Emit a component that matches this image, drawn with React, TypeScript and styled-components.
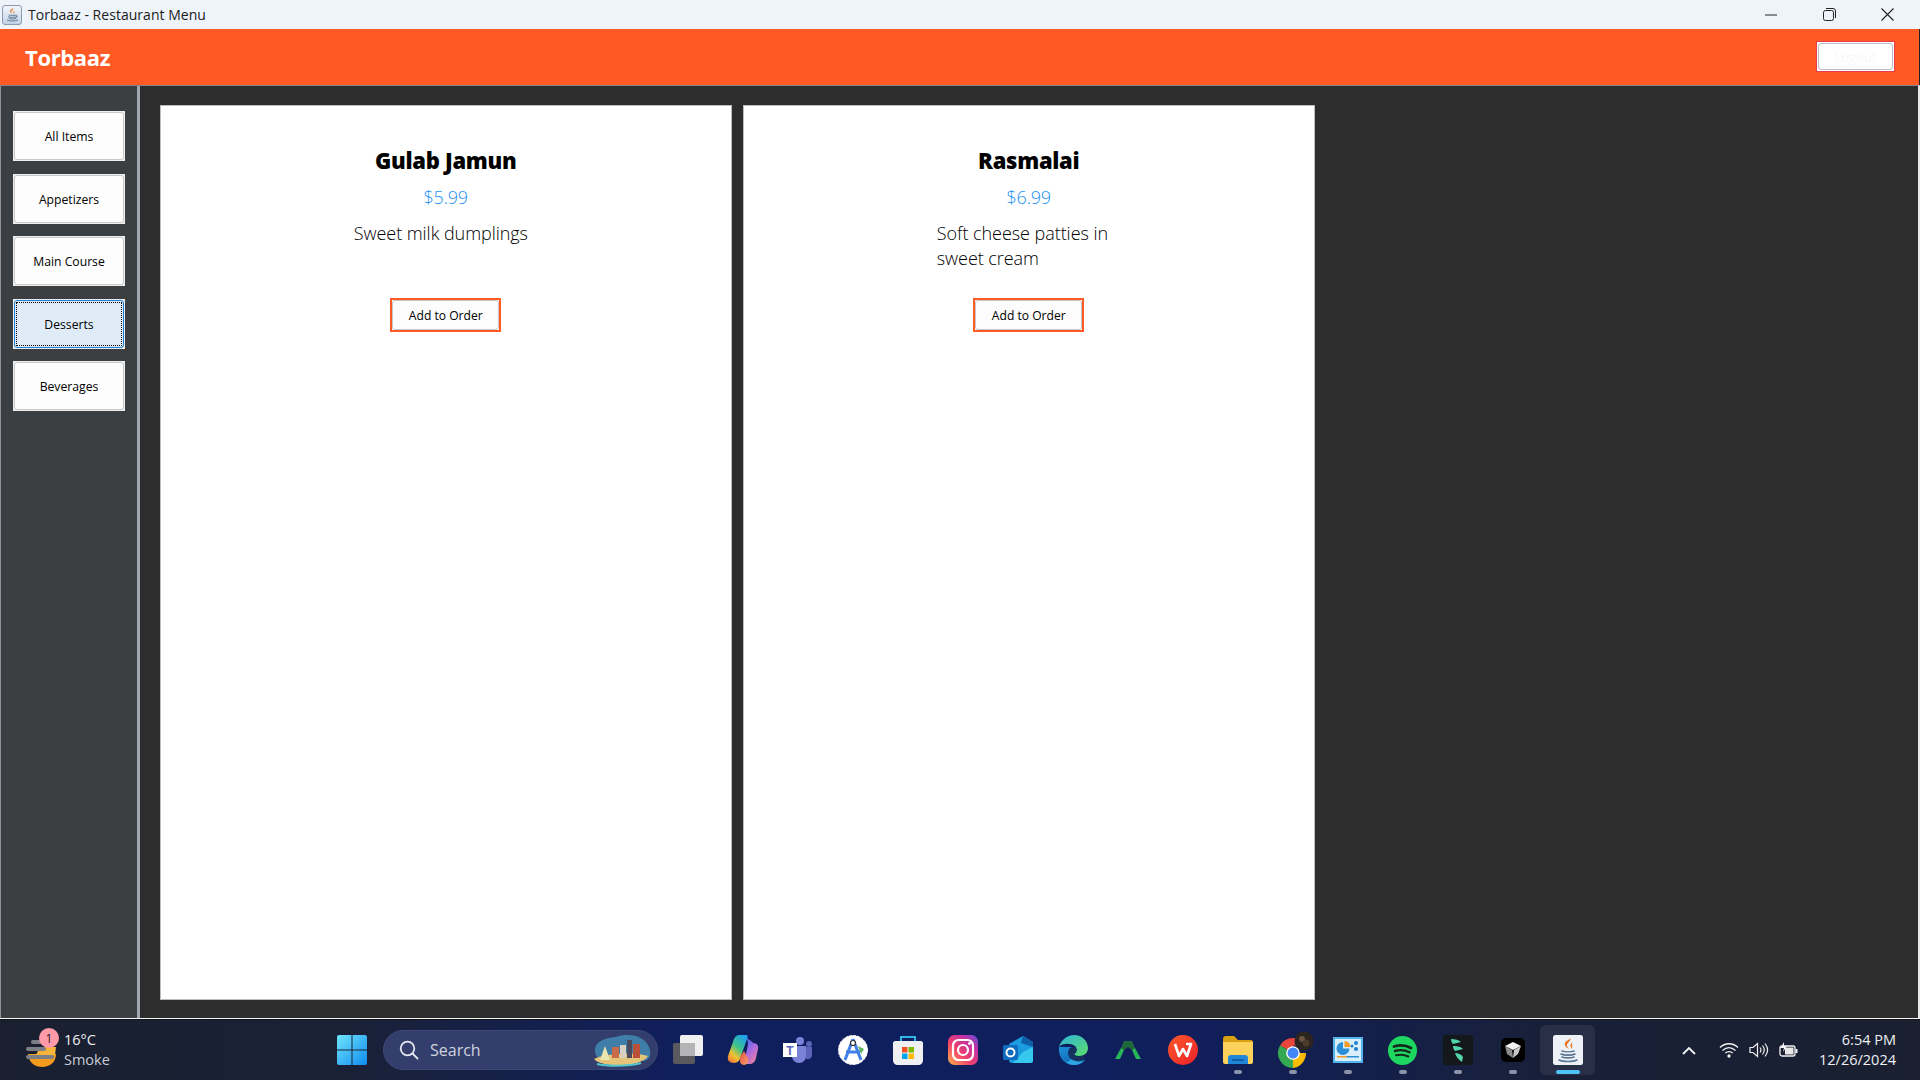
import React from 'react';
import styled, { createGlobalStyle } from 'styled-components';

const Global = createGlobalStyle`
  html, body { margin: 0; padding: 0; background: #2d2d2d; }
  * { box-sizing: border-box; }
  #root { width: 1920px; height: 1080px; overflow: hidden; }
`;

const Frame = styled.div`
  width: 1920px; height: 1080px; display: flex; flex-direction: column;
  font-family: "Open Sans", "Noto Sans", sans-serif; color: #000;
`;

const TitleBar = styled.div`
  height: 29px; flex: none; background: #eff3fa; display: flex; align-items: center; padding: 0 3px 0 2px;
`;
const TitleIcon = styled.div`
  width: 20px; height: 20px; margin-right: 6px; border: 1px solid #8b9bb0; border-radius: 3px;
  background: linear-gradient(#f2f6fb, #c3d3e6); display: flex; align-items: center; justify-content: center;
`;
const TitleText = styled.span`
  font-size: 14px; color: #1c1c1c; letter-spacing: 0.03px; flex: 1; white-space: nowrap;
`;
const WindowControl = styled.div`
  width: 58.5px; height: 29px; display: flex; align-items: center; justify-content: center;
`;

const Header = styled.header`
  height: 56px; flex: none; background: #ff5a23; display: flex; align-items: center; justify-content: space-between;
  padding: 0 24px 1px 25px; border-right: 1px solid #222;
`;
const Brand = styled.h1`
  margin: 0; font-size: 22px; font-weight: 700; color: #fff; letter-spacing: -0.35px;
`;
const Logout = styled.button`
  width: 79px; height: 31px; padding: 1px; margin: 0; background: #fff; border: 1px solid #e43b4f; font: inherit; display: block; cursor: default;
`;
const LogoutFace = styled.span`
  display: flex; align-items: center; justify-content: center; width: 100%; height: 100%;
  border: 1px solid #bcbcc2; border-radius: 3px; background: #fff; font-size: 13px; color: #f8f8f8;
`;

const Body = styled.div`
  flex: 1; min-height: 0; display: flex; border-top: 1px solid #7f858c; border-bottom: 1px solid #f4f4f4; border-right: 2px solid #e8e8e8;
`;
const Sidebar = styled.nav`
  width: 140px; flex: none; background: #3c3f41; border-left: 1px solid #8c919b; border-right: 3px solid #a2a6b0;
  display: flex; flex-direction: column; gap: 12.5px; padding: 25px 0 0 12px;
`;
const SideButton = styled.button`
  width: 112px; height: 50px; padding: 1px; margin: 0; border: 0; background: #eeeeee; font: inherit; display: block; cursor: default;
`;
const Face = styled.span<{ $active?: boolean }>`
  display: flex; align-items: center; justify-content: center; width: 100%; height: 100%;
  font-size: 12.2px; color: #000; border-radius: 3px; padding-top: 1px;
  border: 1px solid ${p => (p.$active ? '#1b7fd4' : '#c8c8c8')};
  background: ${p => (p.$active ? '#dfecf8' : '#fdfdfd')};
  outline: ${p => (p.$active ? '1px dotted #000' : 'none')};
  outline-offset: -3px;
`;

const Main = styled.main`
  flex: 1; min-width: 0; background: #2d2d2d; padding: 19px 0 18px 20px; display: flex; gap: 11.5px;
`;
const Card = styled.article`
  width: 571.5px; background: #fff; border: 1px solid #bdbdbd; display: flex; flex-direction: column; align-items: center; padding-top: 39px;
`;
const CardTitle = styled.h2`
  margin: 0; font-size: 22px; line-height: 30px; font-weight: 800; color: #000; letter-spacing: -0.3px;
`;
const Price = styled.div`
  margin-top: 10px; font-size: 18px; line-height: 24px; color: #1f92f5; font-weight: 300; letter-spacing: -0.2px;
`;
const Description = styled.p`
  margin: 12px 0 0; width: 184px; height: 77px; font-size: 18px; line-height: 25px; font-weight: 300; color: #000; letter-spacing: -0.05px;
`;
const OrderButton = styled.button`
  width: 111px; height: 34px; padding: 0; margin: 0; border: 2px solid #ff5a23; background: #fff; font: inherit; display: block; cursor: default;
`;
const OrderFace = styled.span`
  display: flex; align-items: center; justify-content: center; width: 100%; height: 100%;
  border: 1px solid #c6c6c6; border-radius: 3px; background: #fcfcfc; font-size: 12.1px; color: #000;
`;

const Taskbar = styled.footer`
  height: 61px; flex: none; display: flex; align-items: center; position: relative;
  background: linear-gradient(90deg, #1a2030 0%, #1a2136 18%, #0f1f5e 36%, #101f5c 62%, #182039 80%, #1a2030 100%);
  border-top: 1px solid #12141c;
`;
const Weather = styled.div`
  width: 324px; flex: none; display: flex; align-items: center; gap: 6px; padding-left: 24px; height: 100%;
`;
const WeatherIcon = styled.div`
  width: 34px; height: 40px; position: relative; flex: none;
`;
const Badge = styled.span`
  position: absolute; left: 15px; top: -2px; width: 20px; height: 20px; border-radius: 50%; background: #ff9aa8; color: #222;
  font-size: 12px; display: flex; align-items: center; justify-content: center;
`;
const WeatherText = styled.div`
  display: flex; flex-direction: column; color: #eee; font-size: 14.5px; line-height: 20px;
`;
const Muted = styled.span`
  color: #c8ccd4;
`;
const IconSlot = styled.div<{ $current?: boolean }>`
  width: 55px; height: 50px; flex: none; display: flex; align-items: center; justify-content: center; position: relative; border-radius: 6px;
  background: ${p => (p.$current ? 'rgba(255,255,255,0.07)' : 'transparent')};
`;
const RunDot = styled.span<{ $current?: boolean }>`
  position: absolute; bottom: 1px; left: 50%; transform: translateX(-50%); height: 4px; border-radius: 2px;
  width: ${p => (p.$current ? '24px' : '8px')}; background: ${p => (p.$current ? '#4fc3f7' : '#8b93a8')};
`;
const SearchBox = styled.div`
  width: 275px; height: 40px; flex: none; border-radius: 20px; background: #333e6c; display: flex; align-items: center;
  padding: 0 5px 0 15px; margin: 0 2px 0 4px; gap: 11px; color: #cfd3df; font-size: 16px; border: 1px solid #3d4876;
`;
const SearchLabel = styled.span`
  flex: 1;
`;
const Tray = styled.div`
  margin-left: auto; display: flex; align-items: center; height: 100%; padding-right: 24px;
`;
const TrayIcon = styled.div`
  width: 30px; display: flex; align-items: center; justify-content: center;
`;
const Clock = styled.div`
  margin-left: 15px; text-align: right; color: #eef0f4; font-size: 14.5px; line-height: 20px; white-space: nowrap;
`;
const Spacer = styled.div`
  width: 10px;
`;

const JavaCup = ({ s = 30 }: { s?: number }) => (
  <svg width={s} height={s} viewBox="0 0 30 30">
    <path d="M16 3c2 3-4 5-3 8 .5 1.500 2 2.500 2 3-2-1-5-3-4-6 1-3 5-3 5-5zM19 7c-3 2-3 3-2 5 .5 1-.5 2-1 2 2-.5 3-2 2-4-.5-1 0-2 1-3z" fill="#e8762a" />
    <path d="M9 16c3 1 9 1 12 0M8 19c3 1.500 11 1.500 14 0M9 22c3 1.200 9 1.200 12 0M6 25c4 2 14 2 18 0" fill="none" stroke="#4f6d8c" strokeWidth="1.600" strokeLinecap="round" />
    <path d="M21 17c3-1 4 2 0 3" fill="none" stroke="#4f6d8c" strokeWidth="1.200" />
  </svg>
);

const TaskView = () => (
  <svg width="32" height="30" viewBox="0 0 32 30">
    <rect x="1" y="8" width="22" height="21" rx="2" fill="#5a5a5e" />
    <rect x="8" y="0" width="23" height="21" rx="2" fill="#f0f0f0" />
    <rect x="8" y="8" width="15" height="13" fill="#b4b4b6" />
  </svg>
);

const Copilot = () => (
  <svg width="32" height="32" viewBox="0 0 32 32">
    <defs>
      <linearGradient id="cpa" x1="0.800" y1="0" x2="0.200" y2="1"><stop offset="0" stopColor="#1fa0f0" /><stop offset=".45" stopColor="#3cc48a" /><stop offset=".75" stopColor="#f2c233" /><stop offset="1" stopColor="#ee7a3a" /></linearGradient>
      <linearGradient id="cpb" x1="0.200" y1="0" x2="0.800" y2="1"><stop offset="0" stopColor="#2a6fe8" /><stop offset=".5" stopColor="#a86ae4" /><stop offset="1" stopColor="#f0809a" /></linearGradient>
      <linearGradient id="cpc" x1="0" y1="0" x2="1" y2="1"><stop offset="0" stopColor="#e8503c" /><stop offset="1" stopColor="#f4a070" /></linearGradient>
    </defs>
    <path d="M17 1c3 4 7 5 9 8 3 0 6 2 5 6l-2 9c-1 4-3 6-7 6h-4l1-10 2-10c0-4-2-7-4-9z" fill="url(#cpb)" />
    <path d="M12 1h7c2 0 2 2 1 4l-6 17c-1 4-3 7-7 7-5 0-7-3-6-7L6 8c1-4 3-7 6-7z" fill="url(#cpa)" />
    <path d="M13 23l4-6 4 7c1 4-1 7-4 7-3 0-5-3-4-8z" fill="url(#cpc)" />
  </svg>
);

const Teams = () => (
  <svg width="30" height="26" viewBox="0 0 30 26">
    <circle cx="17" cy="4" r="4" fill="#7b83d8" /><circle cx="26" cy="7" r="3" fill="#5b63b8" />
    <path d="M21 10h8v8c0 3-3 5-6 4z" fill="#5b63b8" />
    <path d="M9 9h14v10c0 4-3 7-7 7s-7-3-7-7z" fill="#7b83d8" />
    <rect x="0" y="6" width="14" height="14" fill="#fff" />
    <text x="7" y="17.500" textAnchor="middle" fontFamily="Liberation Sans, sans-serif" fontWeight="700" fontSize="12" fill="#5b63b8">T</text>
  </svg>
);

const AIcon = () => (
  <svg width="30" height="30" viewBox="0 0 30 30">
    <circle cx="15" cy="15" r="14.500" fill="#fff" stroke="#fff" strokeDasharray="3 1" />
    <path d="M15 4l-8 21M15 4l8 21" stroke="#3f7fe8" strokeWidth="3" fill="none" />
    <path d="M8 17h14" stroke="#3f7fe8" strokeWidth="3" />
    <path d="M20 11l6 3-3 5z" fill="#5fb35a" />
    <circle cx="15" cy="8" r="2.500" fill="#fff" stroke="#333" strokeWidth="1.200" />
  </svg>
);

const Store = () => (
  <svg width="30" height="30" viewBox="0 0 30 30">
    <path d="M8 7V2h14v5" fill="none" stroke="#2bb5e8" strokeWidth="2" />
    <path d="M2 6h26c1 0 2 1 2 2v17c0 3-2 5-5 5H5c-3 0-5-2-5-5V8c0-1 1-2 2-2z" fill="#eef0f2" />
    <rect x="9" y="12" width="5.500" height="5.500" fill="#f25022" /><rect x="15.500" y="12" width="5.500" height="5.500" fill="#7fba00" />
    <rect x="9" y="18.500" width="5.500" height="5.500" fill="#00a4ef" /><rect x="15.500" y="18.500" width="5.500" height="5.500" fill="#ffb900" />
  </svg>
);

const Instagram = () => (
  <svg width="30" height="30" viewBox="0 0 30 30">
    <defs>
      <linearGradient id="ig" x1="0" y1="1" x2="1" y2="0"><stop offset="0" stopColor="#fdb44a" /><stop offset=".4" stopColor="#f0406a" /><stop offset=".75" stopColor="#c22fa8" /><stop offset="1" stopColor="#5d55d8" /></linearGradient>
    </defs>
    <rect width="30" height="30" rx="6.500" fill="url(#ig)" />
    <rect x="5" y="5" width="20" height="20" rx="5.500" fill="none" stroke="#fff" strokeWidth="2.200" />
    <circle cx="15" cy="15" r="5" fill="none" stroke="#fff" strokeWidth="2.200" />
    <circle cx="21.500" cy="8.500" r="1.400" fill="#fff" />
  </svg>
);

const Outlook = () => (
  <svg width="30" height="28" viewBox="0 0 30 28">
    <path d="M6 8l14-8 10 6v18c0 2-1 3-3 3H9c-2 0-3-1-3-3z" fill="#1c9ce0" />
    <path d="M20 0l10 6v5L18 7z" fill="#0d5fa8" />
    <path d="M10 27l10-11 10-5v14c0 1-1 2-3 2z" fill="#37c8f0" />
    <rect x="0" y="9" width="15" height="15" rx="1.500" fill="#0f6cc0" />
    <circle cx="7.500" cy="16.500" r="4" fill="none" stroke="#fff" strokeWidth="2" />
  </svg>
);

const Edge = () => (
  <svg width="30" height="30" viewBox="0 0 30 30">
    <defs>
      <linearGradient id="edg" x1="0" y1="0" x2="1" y2="1"><stop offset="0" stopColor="#1f8fd8" /><stop offset="1" stopColor="#0b5aa8" /></linearGradient>
      <linearGradient id="edh" x1="0" y1="0" x2="1" y2="1"><stop offset="0" stopColor="#2fb4d8" /><stop offset="1" stopColor="#5cdc6c" /></linearGradient>
    </defs>
    <path d="M1 12C0 22 6 30 16 30c5 0 9-2 11-5-6 2-14 1-16-4-2-4 0-8 3-9z" fill="url(#edg)" />
    <path d="M1 12C3 5 9 0 16 0c8 0 14 6 14 13 0 5-4 8-9 8-3 0-5-1-5-2 3-1 4-5 1-8-4-3-13-3-16 1z" fill="url(#edh)" />
    <path d="M11 21c-1-4 1-8 5-9 3 1 3 5 0 7 1 2 4 3 7 2 2 0 3-1 4 4-5 4-14 2-16-4z" fill="#14315f" />
    <path d="M13 24c4 3 10 3 14 1-3 3-7 5-11 5-3 0-6-1-8-3 2 0 4-1 5-3z" fill="#2ea6e4" />
  </svg>
);

const VueMark = () => (
  <svg width="26" height="18" viewBox="0 0 26 18">
    <path d="M9 0h8l3 7-3 2-4-3-4 3-3-2z" fill="#21683c" />
    <path d="M6 7l3 2-4 9H0z" fill="#27b558" /><path d="M20 7l-3 2 4 9h5z" fill="#27b558" />
  </svg>
);

const Wps = () => (
  <svg width="30" height="30" viewBox="0 0 30 30">
    <defs><linearGradient id="wps" x1="0" y1="0" x2="1" y2="1"><stop offset="0" stopColor="#ff5a2a" /><stop offset="1" stopColor="#e8202a" /></linearGradient></defs>
    <circle cx="15" cy="15" r="15" fill="url(#wps)" />
    <path d="M7 9l4 12 4-7 4 7 4-12h-5" fill="none" stroke="#fff" strokeWidth="2.600" strokeLinejoin="round" />
  </svg>
);

const Folder = () => (
  <svg width="30" height="28" viewBox="0 0 30 28">
    <path d="M0 3c0-2 1-3 3-3h8l4 4h13c1 0 2 1 2 2v3H0z" fill="#d9a012" />
    <path d="M0 6h30v20c0 1-1 2-2 2H2c-1 0-2-1-2-2z" fill="#fcd25a" />
    <path d="M5 28v-6c0-2 1-3 3-3h14c2 0 3 1 3 3v6z" fill="#1f86d8" />
    <rect x="9" y="23" width="12" height="2" fill="#0f5fa8" />
  </svg>
);

const Chrome = () => (
  <svg width="42" height="36" viewBox="-6 0 42 36">
    <g transform="translate(0 6)">
      <path d="M15 15L2 7.500A15 15 0 0 1 28 7.500H15z" fill="#e8453a" />
      <path d="M15 15L2 7.500A15 15 0 0 0 15 30z" fill="#35a853" />
      <path d="M15 15h13A15 15 0 0 1 15 30z" fill="#fbbc05" />
      <circle cx="15" cy="15" r="6.800" fill="#fff" /><circle cx="15" cy="15" r="5.500" fill="#4285f4" />
    </g>
    <circle cx="26" cy="9" r="9.500" fill="#2c241e" />
    <circle cx="24" cy="7" r="3" fill="#6b5442" /><circle cx="28" cy="11" r="3.500" fill="#4c3a2c" />
  </svg>
);

const Panel = () => (
  <svg width="30" height="26" viewBox="0 0 30 26">
    <rect width="30" height="26" fill="#54b4ee" /><rect x="2" y="2" width="26" height="22" fill="#d8eefb" />
    <path d="M10 5a6.500 6.500 0 1 0 6.500 6.500H10z" fill="#2b8fd8" /><path d="M11.500 4v6h6a6 6 0 0 0-6-6z" fill="#f59a23" />
    <circle cx="23" cy="6" r="2" fill="#1f7fd0" /><circle cx="23" cy="12" r="2" fill="#1f7fd0" /><circle cx="19" cy="9" r="1.500" fill="#1f7fd0" />
    <rect x="4" y="19" width="10" height="1.500" fill="#f59a23" /><rect x="14" y="19" width="12" height="1.500" fill="#2b8fd8" />
  </svg>
);

const Spotify = () => (
  <svg width="29" height="29" viewBox="0 0 29 29">
    <circle cx="14.500" cy="14.500" r="14.500" fill="#1ed760" />
    <g fill="none" stroke="#14281c" strokeLinecap="round">
      <path d="M6 10.500c6-1.800 12-1.300 17 1.500" strokeWidth="2.800" /><path d="M7 15c5-1.400 10-1 14.500 1.300" strokeWidth="2.400" /><path d="M8 19.300c4.500-1 8.500-.7 12.300 1.200" strokeWidth="2" />
    </g>
  </svg>
);

const Leaf = () => (
  <svg width="30" height="30" viewBox="0 0 30 30">
    <rect width="30" height="30" rx="3" fill="#15181a" />
    <path d="M8 4c4 0 8 1 10 3l-8 2c-1-1-2-3-2-5zM10 11c3 0 7 0 10 3l-8 2c-1-1-2-3-2-5zM12 18c3 0 6 1 8 4l-1 5c-3-2-6-5-7-9z" fill="#52d6a8" />
  </svg>
);

const CubeBox = () => (
  <svg width="24" height="24" viewBox="0 0 24 24">
    <rect width="24" height="24" rx="5" fill="#000" />
    <path d="M12 4l8 4-8 4-8-4z" fill="#f0f0f0" /><path d="M4 8l7 4 1 8-6-4z" fill="#8c8c8c" /><path d="M20 8l-7 4-1 8 5-4z" fill="#c8c8c8" />
  </svg>
);

const JavaPaths = () => (
  <>
    <path d="M16 3c2 3-4 5-3 8 .5 1.500 2 2.500 2 3-2-1-5-3-4-6 1-3 5-3 5-5zM19 7c-3 2-3 3-2 5 .5 1-.5 2-1 2 2-.5 3-2 2-4-.5-1 0-2 1-3z" fill="#e8762a" />
    <path d="M8 16c3 1 9 1 12 0M7 19c3 1.500 11 1.500 14 0M8 22c3 1.200 9 1.200 12 0M5 25c4 2 14 2 18 0" fill="none" stroke="#5a7694" strokeWidth="1.600" strokeLinecap="round" />
  </>
);
const JavaTile = () => (
  <svg width="30" height="30" viewBox="0 0 30 30">
    <rect width="30" height="30" rx="2.500" fill="#eef1f5" />
    <g transform="translate(1 0)"><JavaPaths /></g>
  </svg>
);

const Start = () => (
  <svg width="30" height="30" viewBox="0 0 30 30">
    <defs><linearGradient id="st" x1="0" y1="0" x2="1" y2="1"><stop offset="0" stopColor="#6fe4fb" /><stop offset="1" stopColor="#0f8cf0" /></linearGradient></defs>
    <path d="M0 2a2 2 0 0 1 2-2h12.500v14.500H0zM15.500 0H28a2 2 0 0 1 2 2v12.500H15.500zM0 15.500h14.500V30H2a2 2 0 0 1-2-2zM15.500 15.500H30V28a2 2 0 0 1-2 2H15.500z" fill="url(#st)" />
  </svg>
);

const Island = () => (
  <svg width="60" height="36" viewBox="0 0 60 36">
    <path d="M3 20C2 10 12 6 24 5 36 1 50 3 56 13c4 7 3 15-4 16H20C10 30 4 27 3 20z" fill="#3f7ea8" />
    <path d="M2 27c8-5 40-8 54-3-4 7-20 10-32 9-10 0-18-2-22-6z" fill="#e5c47a" />
    <path d="M8 28l5-14 5 14z" fill="#e8e6b0" />
    <rect x="20" y="15" width="7" height="11" fill="#c96a4a" /><rect x="28" y="13" width="6" height="13" fill="#d8d0c0" /><rect x="35" y="8" width="5" height="18" fill="#4a4a5e" /><rect x="41" y="12" width="7" height="14" fill="#b9503a" />
    <path d="M5 32c8 2 30 3 44-1" stroke="#52c8d0" strokeWidth="2" fill="none" />
  </svg>
);

const WeatherGlyph = () => (
  <svg width="34" height="40" viewBox="0 0 34 40">
    <path d="M4 24h28c0 8-6 13-14 13S5 32 4 24z" fill="#f49a1c" />
    <path d="M16 17h16l-1 8H12z" fill="#f6b53a" />
    <g fill="#7c7f86"><rect x="7" y="10" width="12" height="4" rx="2" /><rect x="2" y="17" width="20" height="4" rx="2" /><rect x="2" y="25" width="28" height="4" rx="2" /></g>
  </svg>
);

const dockIcons: { key: string; node: React.ReactNode; run?: boolean; current?: boolean }[] = [
  { key: 'taskview', node: <TaskView /> },
  { key: 'copilot', node: <Copilot /> },
  { key: 'teams', node: <Teams /> },
  { key: 'a', node: <AIcon /> },
  { key: 'store', node: <Store /> },
  { key: 'insta', node: <Instagram /> },
  { key: 'outlook', node: <Outlook /> },
  { key: 'edge', node: <Edge /> },
  { key: 'vue', node: <VueMark /> },
  { key: 'wps', node: <Wps /> },
  { key: 'folder', node: <Folder />, run: true },
  { key: 'chrome', node: <Chrome />, run: true },
  { key: 'panel', node: <Panel />, run: true },
  { key: 'spotify', node: <Spotify />, run: true },
  { key: 'leaf', node: <Leaf />, run: true },
  { key: 'cube', node: <CubeBox />, run: true },
  { key: 'java', node: <JavaTile />, run: true, current: true },
];

const categories = ['All Items', 'Appetizers', 'Main Course', 'Desserts', 'Beverages'];
const dishes = [
  { name: 'Gulab Jamun', price: '$5.99', text: 'Sweet milk dumplings' },
  { name: 'Rasmalai', price: '$6.99', text: 'Soft cheese patties in sweet cream' },
];

export default function App() {
  return (
    <Frame>
      <Global />
      <TitleBar>
        <TitleIcon><JavaCup s={17} /></TitleIcon>
        <TitleText>Torbaaz - Restaurant Menu</TitleText>
        <WindowControl>
          <svg width="12" height="12" viewBox="0 0 12 12"><path d="M0 6h12" stroke="#222" strokeWidth="1" /></svg>
        </WindowControl>
        <WindowControl>
          <svg width="13" height="13" viewBox="0 0 13 13" fill="none" stroke="#222"><rect x="0.500" y="2.500" width="10" height="10" rx="2" /><path d="M3 .5h7a2.500 2.500 0 0 1 2.500 2.500v7" /></svg>
        </WindowControl>
        <WindowControl>
          <svg width="13" height="13" viewBox="0 0 13 13"><path d="M.5.5l12 12M12.500.5l-12 12" stroke="#222" strokeWidth="1.100" /></svg>
        </WindowControl>
      </TitleBar>
      <Header>
        <Brand>Torbaaz</Brand>
        <Logout><LogoutFace>Logout</LogoutFace></Logout>
      </Header>
      <Body>
        <Sidebar>
          {categories.map(c => (
            <SideButton key={c}><Face $active={c === 'Desserts'}>{c}</Face></SideButton>
          ))}
        </Sidebar>
        <Main>
          {dishes.map(d => (
            <Card key={d.name}>
              <CardTitle>{d.name}</CardTitle>
              <Price>{d.price}</Price>
              <Description>{d.text}</Description>
              <OrderButton><OrderFace>Add to Order</OrderFace></OrderButton>
            </Card>
          ))}
        </Main>
      </Body>
      <Taskbar>
        <Weather>
          <WeatherIcon><WeatherGlyph /><Badge>1</Badge></WeatherIcon>
          <WeatherText><span>16°C</span><Muted>Smoke</Muted></WeatherText>
        </Weather>
        <IconSlot><Start /></IconSlot>
        <SearchBox>
          <svg width="20" height="20" viewBox="0 0 20 20" fill="none" stroke="#e4e6ee" strokeWidth="1.800"><circle cx="8.500" cy="8.500" r="6.800" /><path d="M13.500 13.500l5 5" strokeLinecap="round" /></svg>
          <SearchLabel>Search</SearchLabel>
          <Island />
        </SearchBox>
        {dockIcons.map(i => (
          <IconSlot key={i.key} $current={i.current}>
            {i.node}
            {i.run && <RunDot $current={i.current} />}
          </IconSlot>
        ))}
        <Tray>
          <TrayIcon>
            <svg width="14" height="9" viewBox="0 0 14 9" fill="none" stroke="#f2f2f2" strokeWidth="1.800"><path d="M1 8l6-6 6 6" /></svg>
          </TrayIcon>
          <Spacer />
          <TrayIcon>
            <svg width="20" height="16" viewBox="0 0 20 16" fill="none" stroke="#f2f2f2" strokeWidth="1.300"><path d="M1 5.500c5-5 13-5 18 0M3.500 8.500c4-3.500 9-3.500 13 0M6.300 11c2-1.800 5.400-1.800 7.400 0" /><circle cx="10" cy="14" r="1" fill="#f2f2f2" /></svg>
          </TrayIcon>
          <TrayIcon>
            <svg width="20" height="16" viewBox="0 0 20 16" fill="none" stroke="#f2f2f2" strokeWidth="1.200"><path d="M1 5.500h3L8.500 1.500v13L4 10.500H1z" /><path d="M11 5.500c1.200 1.500 1.200 3.500 0 5M13.500 3.500c2.200 2.800 2.200 6.200 0 9M16 1.500c3.200 4 3.200 9 0 13" /></svg>
          </TrayIcon>
          <TrayIcon>
            <svg width="20" height="16" viewBox="0 0 20 16"><rect x="1" y="4" width="15" height="10" rx="2" fill="none" stroke="#f2f2f2" strokeWidth="1.300" /><rect x="6" y="5.500" width="8.500" height="7" fill="#e8e8e8" /><rect x="16.500" y="7" width="2" height="4" fill="#f2f2f2" /><path d="M5 0L1.500 6H5l-1 4 4-6H5z" fill="#f2f2f2" /></svg>
          </TrayIcon>
          <Clock>
            <div>6:54 PM</div>
            <div>12/26/2024</div>
          </Clock>
        </Tray>
      </Taskbar>
    </Frame>
  );
}
